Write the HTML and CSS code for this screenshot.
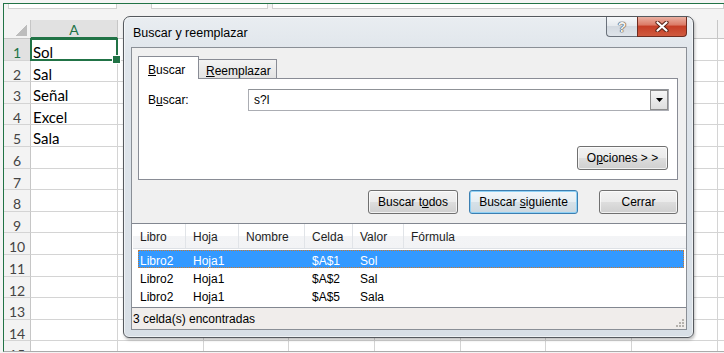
FILE: index.html
```html
<!DOCTYPE html>
<html lang="es">
<head>
    <meta charset="UTF-8">
    <title>Buscar y reemplazar</title>
    <link rel="stylesheet" href="styles.css">
</head>
<body>
    <div class="excel">
        <div class="formula-strip">
            <div class="fbox name-box"></div>
            <div class="fbox fx-box"></div>
            <div class="fbox formula-box"></div>
        </div>

        <div class="sheet">
            <div class="sheet-row col-head">
                <div class="rh corner"></div>
                <div class="ch selected">A</div>
                <div class="ch-rest"></div>
            </div>
            <div class="sheet-row"><div class="rh selected">1</div><div class="cell active">Sol</div><div class="rest"></div></div>
            <div class="sheet-row"><div class="rh">2</div><div class="cell">Sal</div><div class="rest"></div></div>
            <div class="sheet-row"><div class="rh">3</div><div class="cell">Señal</div><div class="rest"></div></div>
            <div class="sheet-row"><div class="rh">4</div><div class="cell">Excel</div><div class="rest"></div></div>
            <div class="sheet-row"><div class="rh">5</div><div class="cell">Sala</div><div class="rest"></div></div>
            <div class="sheet-row"><div class="rh">6</div><div class="cell"></div><div class="rest"></div></div>
            <div class="sheet-row"><div class="rh">7</div><div class="cell"></div><div class="rest"></div></div>
            <div class="sheet-row"><div class="rh">8</div><div class="cell"></div><div class="rest"></div></div>
            <div class="sheet-row"><div class="rh">9</div><div class="cell"></div><div class="rest"></div></div>
            <div class="sheet-row"><div class="rh">10</div><div class="cell"></div><div class="rest"></div></div>
            <div class="sheet-row"><div class="rh">11</div><div class="cell"></div><div class="rest"></div></div>
            <div class="sheet-row"><div class="rh">12</div><div class="cell"></div><div class="rest"></div></div>
            <div class="sheet-row"><div class="rh">13</div><div class="cell"></div><div class="rest"></div></div>
            <div class="sheet-row"><div class="rh">14</div><div class="cell"></div><div class="rest"></div></div>
            <div class="sheet-row"><div class="rh">15</div><div class="cell"></div><div class="rest"></div></div>
        </div>

        <!-- Find dialog over the sheet -->
        <div class="dialog">
            <div class="titlebar">
                <span class="title">Buscar y reemplazar</span>
                <div class="caption-btns">
                    <div class="cap help">?</div>
                    <div class="cap close">
                        <svg width="14" height="11" viewBox="0 0 14 11">
                            <path d="M2.5 1.5 L11.5 9.5 M11.5 1.5 L2.5 9.5" stroke="#5a2418" stroke-width="4.2" stroke-linecap="round" fill="none"/>
                            <path d="M2.5 1.5 L11.5 9.5 M11.5 1.5 L2.5 9.5" stroke="#ffffff" stroke-width="2.2" stroke-linecap="round" fill="none"/>
                        </svg>
                    </div>
                </div>
            </div>

            <div class="client">
                <div class="tabs">
                    <div class="tab active"><u>B</u>uscar</div>
                    <div class="tab"><u>R</u>eemplazar</div>
                </div>

                <div class="tab-panel">
                    <div class="find-row">
                        <span class="find-label">B<u>u</u>scar:</span>
                        <div class="combo">
                            <span class="combo-text">s?l</span>
                            <span class="combo-drop">
                                <svg width="7" height="4" viewBox="0 0 7 4"><path d="M0 0 H7 L3.5 4 Z" fill="#000"/></svg>
                            </span>
                        </div>
                    </div>
                    <div class="options-row">
                        <div class="btn btn-options"><span>O<u>p</u>ciones &gt; &gt;</span></div>
                    </div>
                </div>

                <div class="actions">
                    <div class="btn btn-all"><span>Buscar t<u>o</u>dos</span></div>
                    <div class="btn btn-next"><span>Buscar <u>s</u>iguiente</span></div>
                    <div class="btn btn-close"><span>Cerrar</span></div>
                </div>

                <div class="results">
                    <div class="res-head">
                        <span>Libro</span>
                        <span>Hoja</span>
                        <span>Nombre</span>
                        <span>Celda</span>
                        <span>Valor</span>
                        <span>Fórmula</span>
                    </div>
                    <div class="res-row selected">
                        <span>Libro2</span><span>Hoja1</span><span></span><span>$A$1</span><span>Sol</span><span></span>
                    </div>
                    <div class="res-row">
                        <span>Libro2</span><span>Hoja1</span><span></span><span>$A$2</span><span>Sal</span><span></span>
                    </div>
                    <div class="res-row">
                        <span>Libro2</span><span>Hoja1</span><span></span><span>$A$5</span><span>Sala</span><span></span>
                    </div>
                </div>

                <div class="statusbar">
                    <span>3 celda(s) encontradas</span>
                    <svg class="grip" width="8" height="8" viewBox="0 0 8 8">
                        <rect x="6" y="0" width="2" height="2" fill="#b5b2ad"/>
                        <rect x="3" y="3" width="2" height="2" fill="#b5b2ad"/>
                        <rect x="6" y="3" width="2" height="2" fill="#b5b2ad"/>
                        <rect x="0" y="6" width="2" height="2" fill="#b5b2ad"/>
                        <rect x="3" y="6" width="2" height="2" fill="#b5b2ad"/>
                        <rect x="6" y="6" width="2" height="2" fill="#b5b2ad"/>
                    </svg>
                </div>
            </div>
        </div>
    </div>
</body>
</html>
```

FILE: styles.css
```css
* {
    margin: 0;
    padding: 0;
    box-sizing: border-box;
}

body {
    width: 724px;
    height: 353px;
    overflow: hidden;
    background: #f4f4f4;
    font-family: "Liberation Sans", Arial, sans-serif;
    font-size: 12px;
    color: #000;
}

u {
    text-decoration: underline;
    text-underline-offset: 1px;
}

/* ---------- Excel sheet ---------- */

.excel {
    position: relative;
    margin: 3px 0 0 3px;
    height: 349px;
    border-top: 1px solid #217346;
    border-left: 1px solid #217346;
    border-bottom: 1px solid #ababab;
    background: #fff;
    overflow: hidden;
}

.formula-strip {
    display: flex;
    height: 16px;
    background: #f3f3f3;
}

.fbox {
    height: 5px;
    background: #fff;
    border: 1px solid #d0d0d0;
    border-top: none;
}

.name-box {
    margin-left: 4px;
    width: 109px;
}

.fx-box {
    margin-left: 34px;
    width: 117px;
}

.formula-box {
    margin-left: 4px;
    flex: 1;
}

.sheet-row {
    display: flex;
    height: 21.6px;
}

.col-head {
    height: 19px;
    background: #f3f3f3;
}

.rh {
    width: 27px;
    flex: none;
    background: #f3f3f3;
    border-right: 1px solid #c6c6c6;
    border-bottom: 1px solid #d4d4d4;
    font-family: Lato, "Liberation Sans", sans-serif;
    font-size: 14px;
    color: #444;
    text-align: center;
    padding-top: 5px;
}

.rh.selected {
    background: #e1e1e1;
    color: #217346;
}

.rh.corner {
    padding: 0;
    border-bottom: 1px solid #c6c6c6;
    background: linear-gradient(to bottom right, transparent 50%, #bdbdbd 50%) no-repeat right 3px bottom 2px / 11px 11px, #f3f3f3;
}

.ch {
    width: 87px;
    flex: none;
    border-right: 1px solid #c6c6c6;
    border-bottom: 1px solid #c6c6c6;
    font-family: Lato, "Liberation Sans", sans-serif;
    font-size: 14px;
    text-align: center;
    padding-top: 1px;
    color: #444;
}

.ch.selected {
    background: #e1e1e1;
    color: #217346;
    border-bottom: 2px solid #217346;
}

.ch-rest {
    flex: 1;
    border-bottom: 1px solid #c6c6c6;
    background: repeating-linear-gradient(to right, transparent 0 84.7px, #c6c6c6 84.7px 85.7px);
}

.cell {
    width: 87px;
    flex: none;
    border-right: 1px solid #d4d4d4;
    border-bottom: 1px solid #d4d4d4;
    padding: 4px 0 0 2px;
    font-family: Lato, "Liberation Sans", sans-serif;
    font-size: 15px;
    color: #000;
}

.cell.active {
    position: relative;
}

.cell.active::after {
    content: "";
    position: absolute;
    left: -1px;
    top: -1px;
    right: -1px;
    bottom: -1px;
    border: 2px solid #217346;
}

.cell.active::before {
    content: "";
    position: absolute;
    right: -4px;
    bottom: -4px;
    width: 7px;
    height: 7px;
    background: #217346;
    border: 1px solid #fff;
    z-index: 1;
}

.rest {
    flex: 1;
    border-bottom: 1px solid #d4d4d4;
    background: repeating-linear-gradient(to right, transparent 0 84.7px, #d4d4d4 84.7px 85.7px);
}

/* ---------- Dialog ---------- */

.dialog {
    position: absolute;
    left: 119px;
    top: 12px;
    width: 571px;
    height: 322px;
    display: flex;
    flex-direction: column;
    border: 1px solid #55595e;
    border-radius: 7px 7px 6px 6px;
    background: linear-gradient(to bottom, #e9edf1 0%, #dfe5eb 12%, #d8dfe6 100%);
    box-shadow: inset 0 0 0 1px rgba(255, 255, 255, 0.55), 1px 2px 3px rgba(0, 0, 0, 0.25);
}

.titlebar {
    display: flex;
    height: 30px;
    flex: none;
}

.title {
    padding: 9px 0 0 9px;
    font-size: 12.5px;
    color: #000;
}

.caption-btns {
    display: flex;
    margin-left: auto;
    margin-right: 6px;
    height: 20px;
}

.cap {
    height: 20px;
    border: 1px solid #6a717b;
    border-top: none;
    display: flex;
    align-items: center;
    justify-content: center;
}

.help {
    width: 31px;
    border-right: none;
    border-radius: 0 0 0 4px;
    background: linear-gradient(to bottom, #f6f8fa 0%, #e6eaee 45%, #d3d9e0 50%, #dfe4ea 100%);
    font-weight: bold;
    font-size: 14px;
    color: #f2f2f2;
    text-shadow: 0 0 1px #3c3c3c, 0 0 1px #3c3c3c, 0 0 1px #3c3c3c;
}

.close {
    width: 50px;
    border-color: #6e2c20;
    border-radius: 0 0 4px 0;
    background: linear-gradient(to bottom, #eab0a2 0%, #dc7d69 40%, #c63f27 50%, #cf5a3f 100%);
}

.client {
    flex: 1;
    display: flex;
    flex-direction: column;
    margin: 0 6px 7px 7px;
    border: 1px solid #8a8f96;
    background: #f0f0f0;
}

.tabs {
    display: flex;
    align-items: flex-end;
    height: 30px;
    padding-left: 6px;
    flex: none;
}

.tab {
    height: 19px;
    width: 79px;
    margin-left: -1px;
    border: 1px solid #898c95;
    border-bottom: none;
    background: linear-gradient(to bottom, #f3f3f3, #e3e3e3);
    padding: 4px 0 0 7px;
}

.tab.active {
    position: relative;
    z-index: 1;
    width: 61px;
    height: 23px;
    margin-left: 0;
    margin-bottom: -1px;
    background: #fff;
    padding: 6px 0 0 9px;
}

.tab-panel {
    height: 102px;
    flex: none;
    margin: 0 8px 0 6px;
    border: 1px solid #898c95;
    background: #fff;
}

.find-row {
    display: flex;
    align-items: center;
    margin-top: 10px;
    padding-left: 9px;
}

.find-label {
    width: 100px;
}

.combo {
    flex: 1;
    height: 22px;
    margin-right: 8px;
    display: flex;
    align-items: center;
    border: 1px solid #abadb3;
    border-top-color: #8f9297;
    padding-left: 5px;
}

.combo-text {
    flex: 1;
}

.combo-drop {
    width: 18px;
    height: 20px;
    display: flex;
    align-items: center;
    justify-content: center;
    border: 1px solid #8d8d8d;
    background: linear-gradient(to bottom, #f6f6f6, #dedede);
}

.options-row {
    display: flex;
    justify-content: flex-end;
    margin: 35px 9px 0 0;
}

.btn {
    display: flex;
    align-items: center;
    justify-content: center;
    height: 24px;
    border: 1px solid #707070;
    border-radius: 3px;
    background: linear-gradient(to bottom, #f2f2f2 0%, #ebebeb 48%, #dddddd 52%, #cfcfcf 100%);
    box-shadow: inset 0 0 0 1px rgba(255, 255, 255, 0.7);
}

.btn-options {
    width: 91px;
}

.actions {
    display: flex;
    justify-content: flex-end;
    flex: none;
    margin: 10px 8px 0 0;
}

.btn-all {
    width: 90px;
}

.btn-next {
    width: 109px;
    margin-left: 11px;
    border-color: #3c7fb1;
    box-shadow: inset 0 0 0 1px #8fd1f5;
    background: linear-gradient(to bottom, #f1f6f9 0%, #e6eef3 48%, #d6e1e8 52%, #ccd8e0 100%);
}

.btn-close {
    width: 79px;
    margin-left: 21px;
}

.results {
    height: 85px;
    flex: none;
    margin-top: 9px;
    border-top: 1px solid #828790;
    border-bottom: 1px solid #828790;
    background: #fff;
    padding-left: 1px;
}

.res-head {
    display: grid;
    grid-template-columns: 53px 53px 66px 48px 51px 1fr;
    height: 25px;
    border-bottom: 1px solid #dde1e6;
    background: linear-gradient(to bottom, #ffffff 0%, #ffffff 50%, #f3f4f6 52%, #f2f3f5 100%);
    color: #1e1e1e;
}

.res-head span {
    padding: 6px 0 0 7px;
    border-right: 1px solid #e1e4e8;
}

.res-head span:last-child {
    border-right: none;
}

.res-row {
    display: grid;
    grid-template-columns: 48px 53px 66px 48px 51px 1fr;
    height: 18px;
    margin: 0 2px 0 5px;
    align-items: center;
}

.res-row.selected {
    margin-top: 1px;
}

.res-row span {
    padding: 3px 0 0 7px;
}

.res-row span:first-child {
    padding-left: 2px;
}

.res-row.selected {
    background: #3399ff;
    color: #fff;
    outline: 1px dotted #c9792f;
    outline-offset: -1px;
}

.statusbar {
    flex: 1;
    display: flex;
    align-items: center;
    justify-content: space-between;
    padding: 1px 2px 0 1px;
    background: #f0edeb;
}

.grip {
    align-self: flex-end;
    margin-bottom: 2px;
}
```
